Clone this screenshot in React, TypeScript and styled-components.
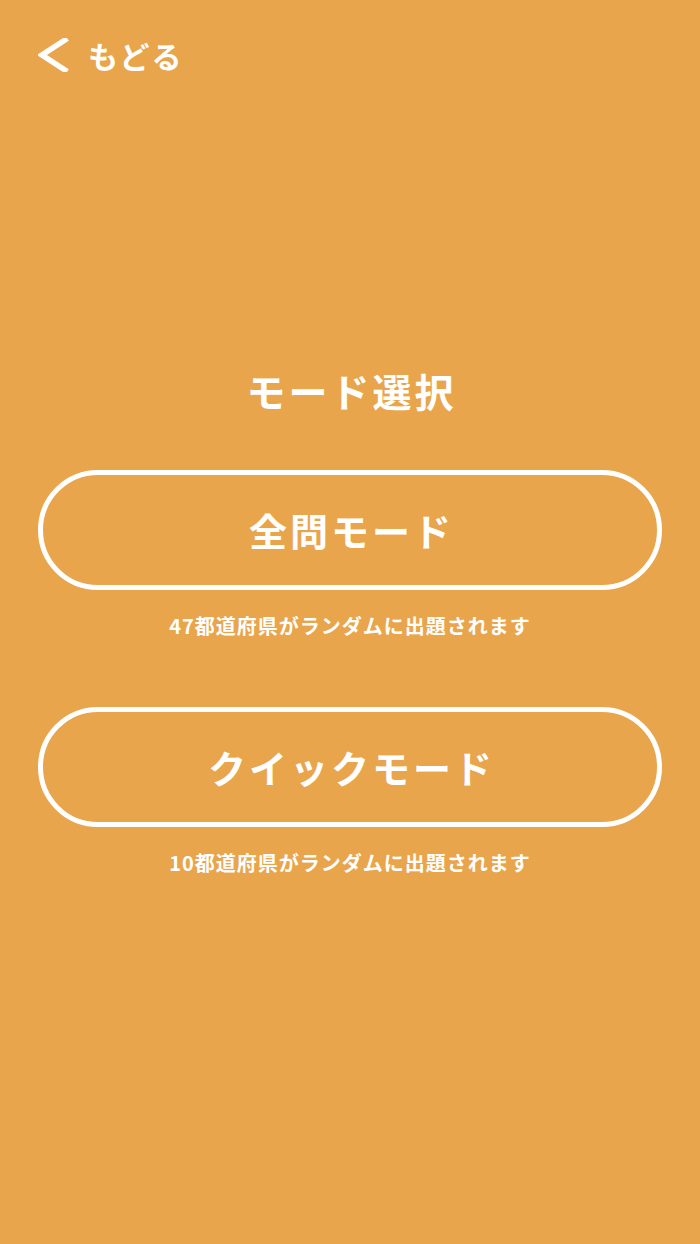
import * as React from 'react';
import styled, { createGlobalStyle } from 'styled-components';

const GlobalStyle = createGlobalStyle`
  html, body {
    margin: 0;
    padding: 0;
    background: #e9a54c;
  }
  body {
    font-family: "Noto Sans CJK JP", "Noto Sans", sans-serif;
    color: #fff;
  }
`;

const Page = styled.div`
  min-height: 1244px;
  background: #e9a54c;
  display: flex;
  flex-direction: column;
`;

const Header = styled.header`
  padding: 38px 0 0 38px;
  height: 34px;
`;

const BackButton = styled.button`
  display: flex;
  align-items: center;
  gap: 19px;
  padding: 0;
  border: none;
  background: none;
  color: #fff;
  cursor: pointer;
  font-family: inherit;
  font-size: 30px;
  font-weight: 700;
  letter-spacing: 2px;
  line-height: 34px;
`;

const Main = styled.main`
  display: flex;
  flex-direction: column;
  align-items: center;
  padding: 0 38px;
`;

const Title = styled.h1`
  margin: 300px 0 0;
  font-size: 39px;
  line-height: 36px;
  font-weight: 700;
  letter-spacing: 3px;
  text-indent: 3px;
`;

const ModeList = styled.div`
  display: flex;
  flex-direction: column;
  align-items: stretch;
  width: 100%;
  margin-top: 62px;
  gap: 71px;
`;

const ModeItem = styled.div`
  display: flex;
  flex-direction: column;
  align-items: center;
  gap: 26px;
`;

const ModeButton = styled.button`
  box-sizing: border-box;
  width: 100%;
  height: 120px;
  border: 5px solid #fff;
  border-radius: 60px;
  background: transparent;
  color: #fff;
  cursor: pointer;
  font-family: inherit;
  font-size: 38px;
  font-weight: 700;
  letter-spacing: 3px;
  text-indent: 3px;
  line-height: 1;
`;

const ModeNote = styled.p`
  margin: 0;
  font-size: 20px;
  line-height: 20px;
  font-weight: 700;
  letter-spacing: 1px;
`;

const Chevron = () => (
  <svg width="31" height="34" viewBox="0 0 31 34" fill="none">
    <path d="M27 2 L4 17 L27 32" stroke="#fff" strokeWidth="5.5" strokeLinecap="square" strokeLinejoin="miter" />
  </svg>
);

const modes = [
  { label: '全問モード', note: '47都道府県がランダムに出題されます' },
  { label: 'クイックモード', note: '10都道府県がランダムに出題されます' },
];

export default function App() {
  return (
    <Page>
      <GlobalStyle />
      <Header>
        <BackButton>
          <Chevron />
          もどる
        </BackButton>
      </Header>
      <Main>
        <Title>モード選択</Title>
        <ModeList>
          {modes.map(mode => (
            <ModeItem key={mode.label}>
              <ModeButton>{mode.label}</ModeButton>
              <ModeNote>{mode.note}</ModeNote>
            </ModeItem>
          ))}
        </ModeList>
      </Main>
    </Page>
  );
}
